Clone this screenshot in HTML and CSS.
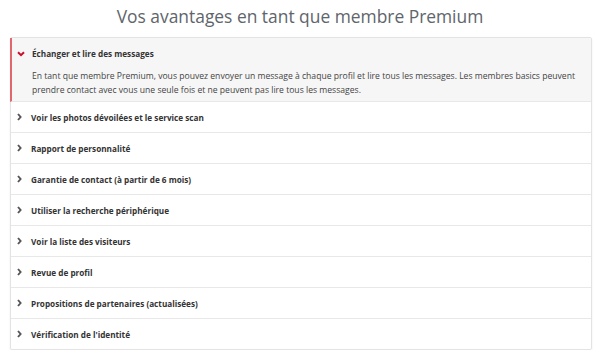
FILE: index.html
```html
<!DOCTYPE html>
<html lang="fr">
<head>
    <meta charset="UTF-8">
    <meta name="viewport" content="width=device-width, initial-scale=1.0">
    <title>Avantages Premium</title>
    <link rel="stylesheet" href="styles.css">
</head>
<body>
    <h1 class="title">Vos avantages en tant que membre Premium</h1>
    <div class="panel">
        <div class="item open">
            <div class="item-head">
                <svg class="chevron" viewBox="0 0 8 6"><path d="M1 1.2 L4 4.2 L7 1.2" /></svg>
                <span>Échanger et lire des messages</span>
            </div>
            <p class="item-body">En tant que membre Premium, vous pouvez envoyer un message à chaque profil et lire tous les messages. Les membres basics peuvent prendre contact avec vous une seule fois et ne peuvent pas lire tous les messages.</p>
        </div>
        <div class="item">
            <div class="item-head">
                <svg class="chevron" viewBox="0 0 5 8"><path d="M1 1 L3.6 4 L1 7" /></svg>
                <span>Voir les photos dévoilées et le service scan</span>
            </div>
        </div>
        <div class="item">
            <div class="item-head">
                <svg class="chevron" viewBox="0 0 5 8"><path d="M1 1 L3.6 4 L1 7" /></svg>
                <span>Rapport de personnalité</span>
            </div>
        </div>
        <div class="item">
            <div class="item-head">
                <svg class="chevron" viewBox="0 0 5 8"><path d="M1 1 L3.6 4 L1 7" /></svg>
                <span>Garantie de contact (à partir de 6 mois)</span>
            </div>
        </div>
        <div class="item">
            <div class="item-head">
                <svg class="chevron" viewBox="0 0 5 8"><path d="M1 1 L3.6 4 L1 7" /></svg>
                <span>Utiliser la recherche périphérique</span>
            </div>
        </div>
        <div class="item">
            <div class="item-head">
                <svg class="chevron" viewBox="0 0 5 8"><path d="M1 1 L3.6 4 L1 7" /></svg>
                <span>Voir la liste des visiteurs</span>
            </div>
        </div>
        <div class="item">
            <div class="item-head">
                <svg class="chevron" viewBox="0 0 5 8"><path d="M1 1 L3.6 4 L1 7" /></svg>
                <span>Revue de profil</span>
            </div>
        </div>
        <div class="item">
            <div class="item-head">
                <svg class="chevron" viewBox="0 0 5 8"><path d="M1 1 L3.6 4 L1 7" /></svg>
                <span>Propositions de partenaires (actualisées)</span>
            </div>
        </div>
        <div class="item">
            <div class="item-head">
                <svg class="chevron" viewBox="0 0 5 8"><path d="M1 1 L3.6 4 L1 7" /></svg>
                <span>Vérification de l'identité</span>
            </div>
        </div>
    </div>
</body>
</html>
```

FILE: styles.css
```css
body {
    font-family: "Open Sans", Arial, sans-serif;
    background-color: #ffffff;
    margin: 0;
    color: #333333;
}
.title {
    font-size: 17.4px;
    font-weight: normal;
    color: #60656b;
    text-align: center;
    margin: 0;
    padding-top: 3px;
    height: 34px;
    line-height: 26px;
}
.panel {
    margin: 0 8px 0 10px;
    border: 1px solid #e3e3e3;
    border-radius: 2px;
    box-shadow: 0 1px 2px rgba(0, 0, 0, 0.08);
}
.item {
    border-bottom: 1px solid #e8e8e8;
}
.item:last-child {
    border-bottom: none;
}
.item-head {
    display: flex;
    align-items: center;
    height: 30px;
    padding-left: 6px;
    font-size: 8.2px;
    font-weight: bold;
    color: #333333;
}
.chevron {
    width: 5px;
    height: 8px;
    margin-right: 9px;
    fill: none;
    stroke: #555555;
    stroke-width: 1.9;
}
.item.open {
    background-color: #f6f6f6;
    border-left: 2px solid #e0676d;
    margin-left: -1px;
}
.item.open .item-head {
    height: 31px;
    padding-left: 5px;
}
.item.open .chevron {
    width: 8px;
    height: 6px;
    margin-right: 7px;
    stroke: #c8102e;
    stroke-width: 2;
}
.item-body {
    margin: 0;
    padding: 0 6px 4px 20px;
    font-size: 8.6px;
    line-height: 14px;
    color: #444444;
}
```
